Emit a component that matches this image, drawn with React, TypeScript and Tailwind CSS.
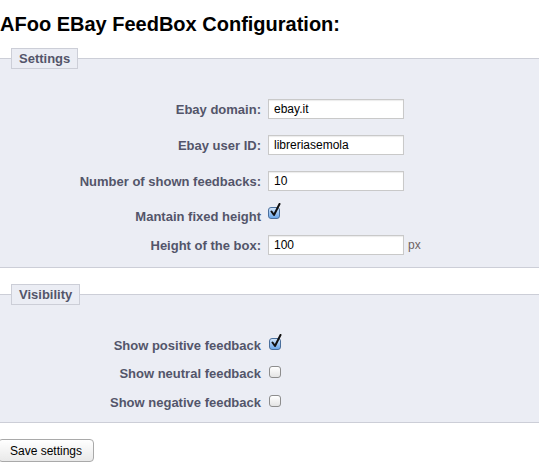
import React from "react";

function Check({ checked }: { checked?: boolean }) {
  if (checked) {
    return (
      <span className="relative block h-[12px] w-[12px] rounded-[3px] border border-[#4a6f9c] bg-linear-to-b from-[#cfe4fb] to-[#6aa6e8]">
        <svg
          className="absolute left-[0px] top-[-5px]"
          width="13"
          height="15"
          viewBox="0 0 13 15"
        >
          <path
            d="M2.5 8.5 L5 12 L10.5 1"
            fill="none"
            stroke="#111"
            strokeWidth="2"
            strokeLinecap="round"
            strokeLinejoin="round"
          />
        </svg>
      </span>
    );
  }
  return (
    <span className="block h-[12px] w-[12px] rounded-[3px] border border-[#8d8d8d] bg-linear-to-b from-white to-[#e4e4e4]" />
  );
}

function TextRow({ label, value, suffix }: { label: string; value: string; suffix?: string }) {
  return (
    <div className="flex h-[20px] items-center">
      <label className="w-[250px] text-right text-[13px] font-bold leading-[15px]">{label}</label>
      <input
        readOnly
        value={value}
        className="ml-[7px] h-[20px] w-[136px] border border-[#c9c9c9] bg-white pl-[5px] text-[12px] text-black shadow-[inset_0_1px_1px_rgba(0,0,0,0.08)] outline-none"
      />
      {suffix && <span className="ml-[4px] text-[12px] text-[#6e6262]">{suffix}</span>}
    </div>
  );
}

function CheckRow({ label, checked }: { label: string; checked?: boolean }) {
  return (
    <div className="flex items-end">
      <label className="w-[250px] text-right text-[13px] font-bold leading-[15px]">{label}</label>
      <span className="mb-[3px] ml-[8px]">
        <Check checked={checked} />
      </span>
    </div>
  );
}

export default function App() {
  return (
    <div className="h-[473px] w-[539px] overflow-hidden bg-white font-['Liberation_Sans',Arial,sans-serif]">
      {/* Title */}
      <h2 className="mt-[12px] whitespace-nowrap text-[20px] font-bold leading-[24px] text-black">
        AFoo EBay FeedBox Configuration:
      </h2>

      {/* Settings */}
      <fieldset className="-ml-[10px] mt-[12px] w-[580px] border border-[#ccced7] bg-[#ebedf4] pb-[12px] pl-[20px] pt-[30px] text-[#53556a]">
        <legend className="border border-[#ccced7] bg-[#ebedf4] px-[7px] py-[2px] text-[13px] font-bold leading-[15px]">
          Settings
        </legend>
        <div className="flex flex-col">
          <TextRow label="Ebay domain:" value="ebay.it" />
          <div className="mt-[16px]">
            <TextRow label="Ebay user ID:" value="libreriasemola" />
          </div>
          <div className="mt-[16px]">
            <TextRow label="Number of shown feedbacks:" value="10" />
          </div>
          <div className="mt-[16px] flex items-start">
            <label className="mt-[2px] w-[250px] text-right text-[13px] font-bold leading-[15px]">
              Mantain fixed height
            </label>
            <span className="ml-[7px]">
              <Check checked />
            </span>
          </div>
          <div className="mt-[11px]">
            <TextRow label="Height of the box:" value="100" suffix="px" />
          </div>
        </div>
      </fieldset>

      {/* Visibility */}
      <fieldset className="-ml-[10px] mt-[16px] w-[580px] border border-[#ccced7] bg-[#ebedf4] pb-[12px] pl-[20px] pt-[33px] text-[#53556a]">
        <legend className="border border-[#ccced7] bg-[#ebedf4] px-[7px] py-[2px] text-[13px] font-bold leading-[15px]">
          Visibility
        </legend>
        <div className="flex flex-col">
          <CheckRow label="Show positive feedback" checked />
          <div className="mt-[13px]">
            <CheckRow label="Show neutral feedback" />
          </div>
          <div className="mt-[14px]">
            <CheckRow label="Show negative feedback" />
          </div>
        </div>
      </fieldset>

      <button className="-ml-[2px] mt-[16px] h-[23px] rounded-[4px] border border-[#a9a9a9] bg-linear-to-b from-white to-[#e9e9e9] px-[11px] text-[12px] text-black">
        Save settings
      </button>
    </div>
  );
}
